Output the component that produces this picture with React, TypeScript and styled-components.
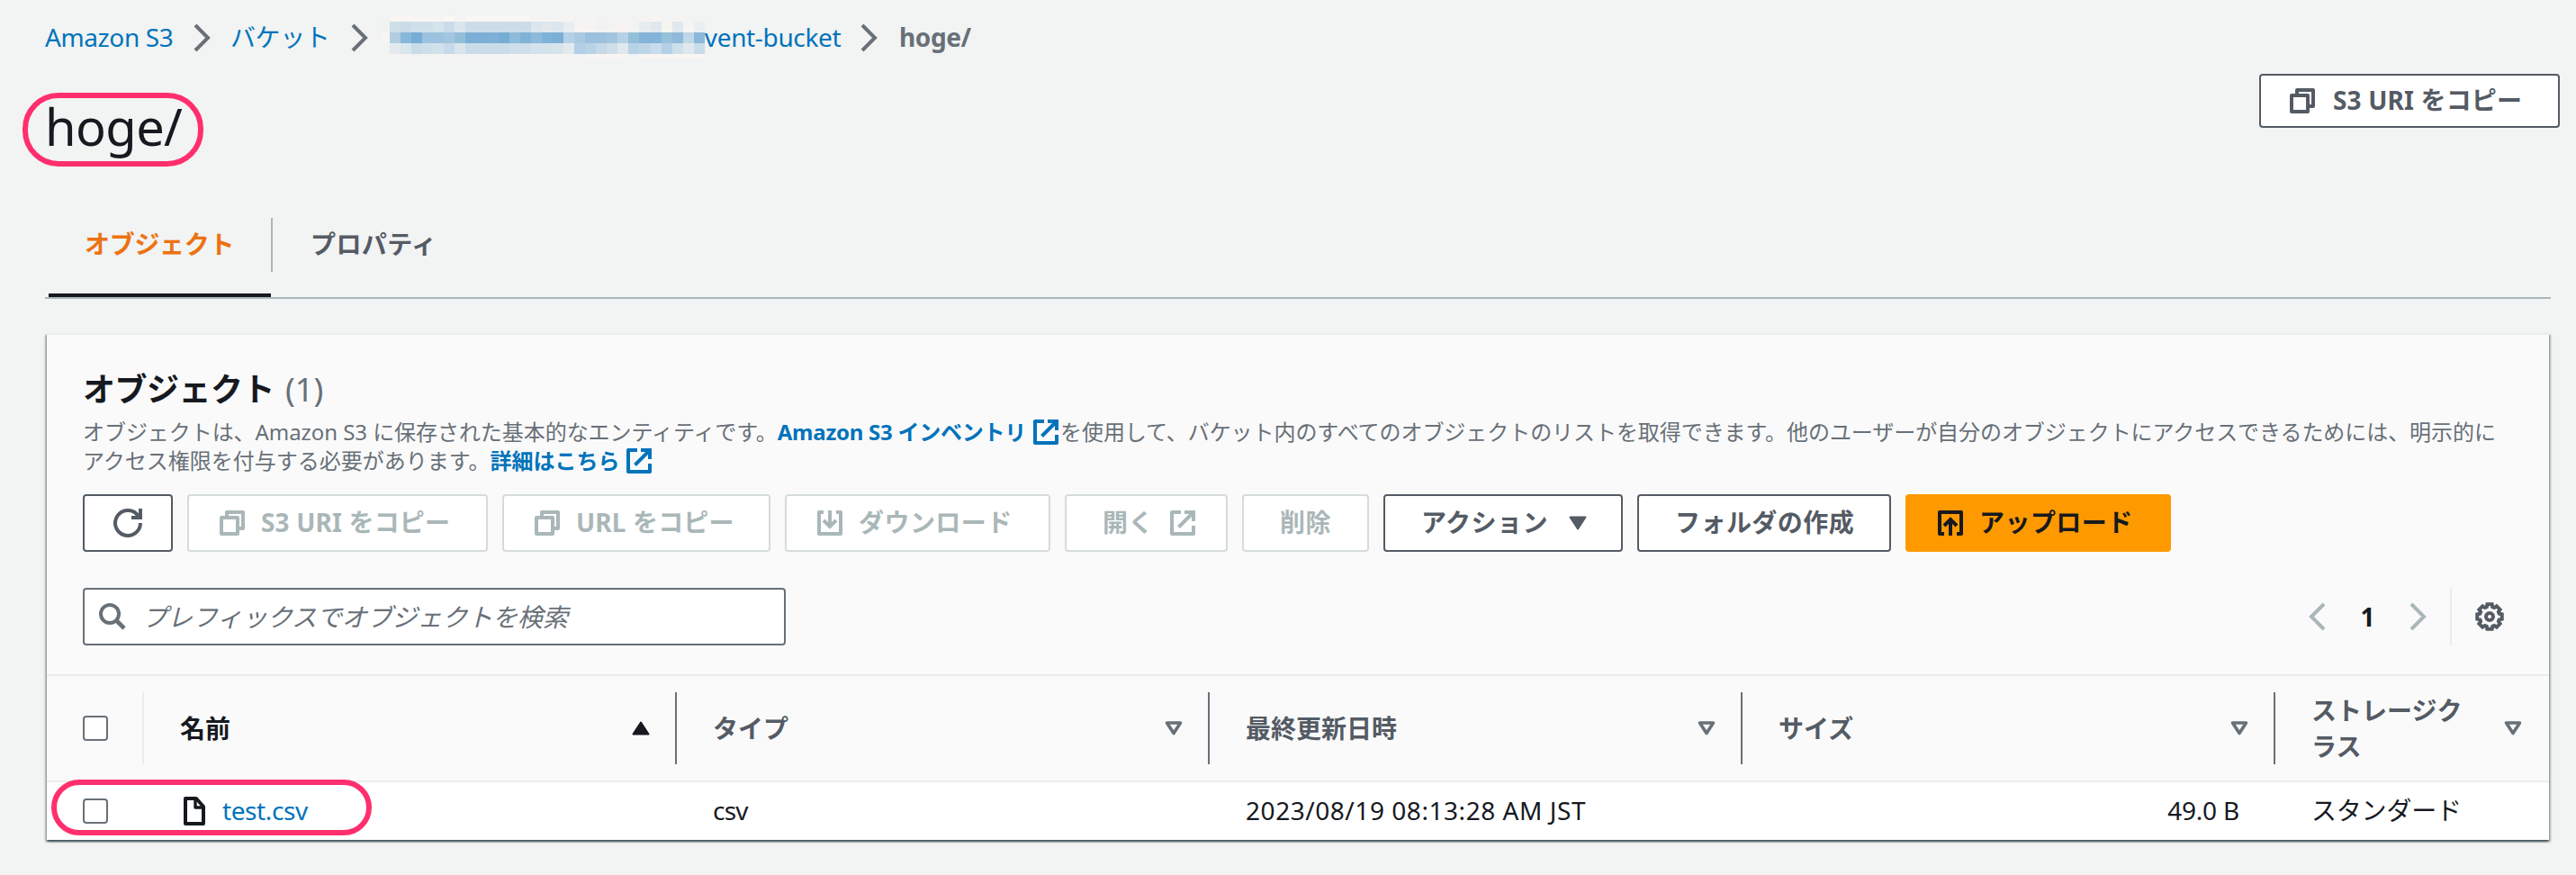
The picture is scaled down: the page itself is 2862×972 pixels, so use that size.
import React from 'react';
import styled, { createGlobalStyle, css } from 'styled-components';

const GlobalStyle = createGlobalStyle`
  *, *::before, *::after { box-sizing: border-box; }
  body {
    margin: 0;
    background: #f2f3f3;
    color: #16191f;
    font-family: "Noto Sans", "Noto Sans CJK JP", sans-serif;
    font-size: 28px;
    line-height: 40px;
  }
`;

const Page = styled.div`
  width: 2862px;
  height: 972px;
  padding: 21px 18px 0 50px;
  overflow: hidden;
`;

/* ---------- text ---------- */

const Tracked = styled.span<{ $track?: number }>`
  letter-spacing: ${(p) => p.$track ?? 0}px;
  white-space: nowrap;
`;

/* ---------- icons ---------- */

const Icon = styled.svg`
  display: block;
  flex: none;
  fill: none;
  stroke: currentColor;
  stroke-width: 4;
`;

const CopyIcon = () => (
  <Icon width="28" height="28" viewBox="0 0 28 28" strokeLinejoin="round">
    <path d="M2 8H20V26H2Z" />
    <path d="M8 8V2H26V20H20" />
  </Icon>
);

const ExternalIcon = () => (
  <Icon width="28" height="28" viewBox="0 0 28 28">
    <path d="M12 2H2V26H26V17" strokeLinejoin="round" />
    <path d="M16 2H26V12M25.5 2.5L9.5 18.5" />
  </Icon>
);

const DownloadIcon = () => (
  <Icon width="28" height="28" viewBox="0 0 28 28">
    <path d="M7 2H2V26H26V2H21" strokeLinejoin="round" />
    <path d="M14 0V18M7 11L14 18L21 11" />
  </Icon>
);

const UploadIcon = () => (
  <Icon width="28" height="28" viewBox="0 0 28 28">
    <path d="M7 26H2V2H26V26H21" strokeLinejoin="round" />
    <path d="M14 28V10M7 17L14 10L21 17" />
  </Icon>
);

const RefreshIcon = () => (
  <Icon width="32" height="32" viewBox="0 0 32 32">
    <path d="M30 16A14 14 0 1 1 27.5 8" />
    <path d="M30 0V10H20" />
  </Icon>
);

const SearchIcon = () => (
  <Icon width="30" height="30" viewBox="0 0 30 30">
    <circle cx="12" cy="12" r="10" />
    <path d="M19 19L28 28" strokeWidth="4.6" />
  </Icon>
);

const ChevronIcon = ({ left }: { left?: boolean }) => (
  <Icon width="19" height="32" viewBox="0 0 19 32">
    <path d={left ? 'M17 2L3 16L17 30' : 'M2 2L16 16L2 30'} />
  </Icon>
);

const gearPoints = Array.from({ length: 8 })
  .flatMap((_, tooth) =>
    [
      [-17, 11.2],
      [-11, 14],
      [11, 14],
      [17, 11.2],
    ].map(([offset, radius]) => {
      const angle = ((tooth * 45 + offset) * Math.PI) / 180;
      return `${(16 + radius * Math.sin(angle)).toFixed(2)},${(16 - radius * Math.cos(angle)).toFixed(2)}`;
    }),
  )
  .join(' ');

const GearIcon = () => (
  <Icon width="32" height="32" viewBox="0 0 32 32">
    <polygon points={gearPoints} />
    <circle cx="16" cy="16" r="4" />
  </Icon>
);

const FileIcon = () => (
  <Icon width="24" height="32" viewBox="0 0 24 32" strokeLinejoin="round">
    <path d="M2 2H14L22 11V30H2Z" />
    <path d="M13 2V12H22" strokeWidth="3.4" />
  </Icon>
);

const CaretDownIcon = () => (
  <Icon width="20" height="16" viewBox="0 0 20 16" strokeLinejoin="round">
    <path d="M1.5 1.5H18.5L10 14.5Z" fill="currentColor" strokeWidth="2" />
  </Icon>
);

const SortAscIcon = () => (
  <Icon width="20" height="16" viewBox="0 0 20 16" strokeLinejoin="round">
    <path d="M1.5 14.5H18.5L10 1.5Z" fill="currentColor" strokeWidth="2" />
  </Icon>
);

const SortIcon = () => (
  <Icon width="20" height="16" viewBox="0 0 20 16" strokeLinejoin="round">
    <path d="M2.5 2H17.5L10 13.5Z" strokeWidth="3.6" />
  </Icon>
);

/* ---------- breadcrumbs ---------- */

const Breadcrumbs = styled.nav`
  display: flex;
  align-items: center;
  height: 40px;
`;

const Crumb = styled.span<{ $width?: number; $current?: boolean }>`
  display: flex;
  align-items: center;
  width: ${(p) => (p.$width ? `${p.$width}px` : 'auto')};
  color: ${(p) => (p.$current ? '#687078' : '#0073bb')};
  font-weight: ${(p) => (p.$current ? 700 : 400)};
`;

const Separator = styled.span<{ $gap: number }>`
  margin-right: ${(p) => p.$gap}px;
  padding-top: 2px;
  color: #687078;
`;

const Mosaic = styled.span`
  display: grid;
  grid-template-columns: 9px repeat(29, 12.07px);
  grid-template-rows: 6px 12px 12px 12px 4px;
`;

const Tile = styled.span<{ $tone: string }>`
  background: #${(p) => p.$tone};
`;

const edge = 'f8f5f3';
const blank = 'f2f3f3';
const repeatTone = (tone: string, n: number) => Array<string>(n).fill(tone);

const mosaicRows: string[][] = [
  [blank, ...repeatTone(edge, 5), 'fcf7f1', 'f5f4f3', ...repeatTone('faf6f3', 6), ...repeatTone('f6f4f3', 4), 'f3f3f3', 'f4f4f3', ...repeatTone(blank, 3), 'f3f3f3', 'f5f4f3', 'f7f5f2', blank, 'f6f4f3', 'f3f3f3', blank],
  ['f0f3f2', 'cddfe9', 'c9dce8', 'cfe0ea', 'd0e0ea', 'd4e3ec', 'cadcea', 'dae6ed', ...repeatTone('ccdde9', 6), 'dbe6ed', 'e0e8ee', 'dae6ed', 'e9edf2', 'f7f3f2', 'f5f4f2', 'f2f2f2', 'f3f3f2', 'f6f3f2', 'f2f3f2', 'e6ecf0', 'dfe8ee', 'f5f4f1', 'dfe8ed', 'f5f4f2', 'ebeff2'],
  ['f8f4f2', 'b0cde2', '87b7db', '76add5', '9bc2de', '9bc2de', 'a2c5e0', '93bed9', '7cafd7', '7cafd7', '7eb0d7', '76add5', '8fbadb', '80b2d8', '8db9da', '7eb1d8', '7cafd6', 'b6d1e6', 'a9c9e1', '9bc1de', '9bc1de', 'a2c5df', 'b6d1e6', '94bfd8', '84b4d9', '84b4d9', '98c1dc', '8fbadb', 'c0d7e7', '8cb8da'],
  [blank, 'e2eaef', 'dae5ed', 'c8dce9', 'cedfe9', 'd3e1eb', 'c5daea', 'dae5eb', 'cadcea', ...repeatTone('c9dce9', 3), 'cedeea', 'cedeea', 'd4e2eb', 'd4e2eb', 'd8e4ec', 'e2eaee', 'b2cfe6', 'b9d3e6', 'c5d9e8', 'cfdfe9', 'e0e8ee', 'b6d3e6', 'bcd5e7', 'c9dceb', 'b5d0e6', 'cddfea', 'e0e8ee', 'c9dcea'],
  [blank, 'f5f4f3', 'f5f4f3', blank, 'f3f3f3', 'f3f3f3', 'f7f5f2', 'f3f3f3', ...repeatTone('f6f4f3', 6), ...repeatTone('f5f4f3', 4), blank, ...repeatTone('f8f5f2', 4), blank, ...repeatTone('f9f6f2', 6)],
].map((row) => [...row, ...repeatTone(blank, Math.max(0, 30 - row.length))].slice(0, 30));

/* ---------- page header ---------- */

const Header = styled.header`
  display: flex;
  justify-content: space-between;
  align-items: flex-start;
  height: 94px;
  margin-top: 21px;
`;

const TitleWrap = styled.div`
  position: relative;
  margin-top: 22px;
`;

const Title = styled.h1`
  margin: 0;
  font-size: 56px;
  line-height: 72px;
  font-weight: 400;
  letter-spacing: -0.6px;
`;

const Highlight = styled.span<{ $x: number; $y: number; $w: number; $h: number }>`
  position: absolute;
  left: ${(p) => p.$x}px;
  top: ${(p) => p.$y}px;
  width: ${(p) => p.$w}px;
  height: ${(p) => p.$h}px;
  border: 6px solid #ff2f6e;
  border-radius: 40px;
  pointer-events: none;
`;

type ButtonKind = 'normal' | 'disabled' | 'primary';

const buttonKinds = {
  normal: css`
    color: #545b64;
    background: #fff;
    border-color: #545b64;
  `,
  disabled: css`
    color: #aab7b8;
    background: #fff;
    border-color: #d5dbdb;
  `,
  primary: css`
    color: #16191f;
    background: #ff9900;
    border-color: #ff9900;
  `,
};

const Button = styled.button<{ $kind?: ButtonKind; $width: number; $height?: number; $pad?: number; $gap?: number }>`
  display: flex;
  align-items: center;
  flex: none;
  gap: ${(p) => p.$gap ?? 18}px;
  width: ${(p) => p.$width}px;
  height: ${(p) => p.$height ?? 64}px;
  padding: 0 0 0 ${(p) => p.$pad ?? 34}px;
  border: 2px solid;
  border-radius: 4px;
  font: inherit;
  font-weight: 700;
  white-space: nowrap;
  ${(p) => buttonKinds[p.$kind ?? 'normal']}
`;

const ButtonLabel = styled.span<{ $track?: number }>`
  padding-bottom: 2px;
  letter-spacing: ${(p) => p.$track ?? 0.45}px;
`;

/* ---------- tabs ---------- */

const Tabs = styled.div`
  display: flex;
  align-items: center;
  width: 2784px;
  height: 120px;
  margin-top: 36px;
  padding-left: 4px;
  border-bottom: 2px solid #aab7b8;
  font-weight: 700;
`;

const Tab = styled.div<{ $active?: boolean }>`
  display: flex;
  align-items: center;
  height: 118px;
  width: 247px;
  padding: ${(p) => (p.$active ? '4px 0 0 40px' : '0 0 0 42px')};
  border-bottom: ${(p) => (p.$active ? '4px solid #16191f' : '0')};
  color: ${(p) => (p.$active ? '#ec7211' : '#545b64')};
  letter-spacing: ${(p) => (p.$active ? -0.3 : 0.4)}px;
  white-space: nowrap;
`;

const TabDivider = styled.span`
  width: 2px;
  height: 60px;
  margin-top: 2px;
  background: #aab7b8;
`;

/* ---------- card ---------- */

const Card = styled.section`
  position: relative;
  width: 2780px;
  margin: 38px 0 0 2px;
  border-top: 2px solid #eaeded;
  background: #fafafa;
  box-shadow:
    0 2px 2px 0 rgba(0, 28, 36, 0.55),
    2px 2px 2px 0 rgba(0, 28, 36, 0.26),
    -2px 2px 2px 0 rgba(0, 28, 36, 0.26);
`;

const CardHeader = styled.div`
  padding: 39px 40px 32px;
`;

const CardTitle = styled.h2`
  display: flex;
  gap: 12px;
  margin: 0;
  font-size: 36px;
  line-height: 44px;
`;

const Counter = styled.span`
  color: #687078;
  font-weight: 400;
`;

const Description = styled.p`
  margin: 9px 0 0;
  color: #687078;
  font-size: 24px;
  line-height: 32px;
`;

const DescriptionLine = styled.span`
  display: flex;
  align-items: center;
  height: 32px;
`;

const InlineLink = styled.a`
  display: flex;
  align-items: center;
  color: #0073bb;
  font-weight: 700;
`;

const LinkIcon = styled.span<{ $right?: number }>`
  margin: 0 ${(p) => p.$right ?? 0}px 0 8px;
`;

const Toolbar = styled.div`
  display: flex;
  gap: 16px;
  margin-top: 21px;
`;

const FilterRow = styled.div`
  display: flex;
  align-items: center;
  justify-content: space-between;
  margin-top: 40px;
`;

const SearchBox = styled.div`
  display: flex;
  align-items: center;
  gap: 18px;
  width: 781px;
  height: 64px;
  padding-left: 16px;
  border: 2px solid #687078;
  border-radius: 4px;
  background: #fff;
  color: #687078;
`;

const Placeholder = styled.span`
  padding-bottom: 1px;
  font-style: italic;
  letter-spacing: -0.1px;
`;

const Pagination = styled.div`
  display: flex;
  align-items: center;
  height: 64px;
  padding-right: 10px;
  color: #aab7b8;
`;

const PageNumber = styled.span`
  width: 93px;
  padding-bottom: 1px;
  color: #16191f;
  font-weight: 700;
  text-align: center;
`;

const Preferences = styled.span`
  display: flex;
  align-items: center;
  height: 64px;
  margin-left: 26px;
  padding-left: 26px;
  border-left: 2px solid #eaeded;
  color: #545b64;
`;

/* ---------- table ---------- */

const Row = styled.div<{ $head?: boolean }>`
  display: grid;
  grid-template-columns: 106px repeat(4, 592px) 306px;
  height: ${(p) => (p.$head ? 120 : 64)}px;
  border: solid #eaeded;
  border-width: ${(p) => (p.$head ? '2px 0' : '0')};
  background: ${(p) => (p.$head ? '#fafafa' : '#fff')};
`;

const CheckCell = styled.div`
  display: flex;
  align-items: center;
  padding-left: 40px;
`;

const Checkbox = styled.span`
  width: 28px;
  height: 28px;
  border: 2px solid #687078;
  border-radius: 4px;
  background: #fff;
`;

const HeadCell = styled.div<{ $sorted?: boolean; $last?: boolean }>`
  display: flex;
  align-items: center;
  padding-right: ${(p) => (p.$last ? 30 : 28)}px;
  color: ${(p) => (p.$sorted ? '#16191f' : '#545b64')};
  font-weight: 700;

  &::before {
    content: '';
    width: 2px;
    height: 80px;
    margin-right: 40px;
    background: ${(p) => (p.$sorted ? '#eaeded' : '#687078')};
  }
`;

const HeadLabel = styled.span`
  flex: 1;
  white-space: nowrap;
`;

const SortMark = styled.span<{ $sorted?: boolean }>`
  color: ${(p) => (p.$sorted ? '#16191f' : '#687078')};
`;

const Cell = styled.div<{ $right?: boolean }>`
  display: flex;
  align-items: center;
  justify-content: ${(p) => (p.$right ? 'flex-end' : 'flex-start')};
  padding: 0 38px 2px 42px;
`;

const FileLink = styled.a`
  display: flex;
  align-items: center;
  gap: 19px;
  padding-left: 4px;
  color: #0073bb;
`;

const FileMark = styled.span`
  padding-top: 2px;
  color: #16191f;
`;

const columns: { label: React.ReactNode; sorted?: boolean; last?: boolean }[] = [
  { label: '名前', sorted: true },
  { label: 'タイプ' },
  { label: '最終更新日時' },
  { label: 'サイズ' },
  { label: <>ストレージク<br />ラス</>, last: true },
];

export default function App() {
  return (
    <>
      <GlobalStyle />
      <Page>
        <Breadcrumbs>
          <Crumb $width={165}><Tracked $track={-0.4}>Amazon S3</Tracked></Crumb>
          <Separator $gap={22}><ChevronIcon /></Separator>
          <Crumb $width={134}><Tracked $track={-0.4}>バケット</Tracked></Crumb>
          <Separator $gap={15}><ChevronIcon /></Separator>
          <Crumb $width={532}>
            <Mosaic>
              {mosaicRows.flatMap((row, y) => row.map((tone, x) => <Tile key={`${y}-${x}`} $tone={tone} />))}
            </Mosaic>
            <Tracked $track={-0.35}>vent-bucket</Tracked>
          </Crumb>
          <Separator $gap={24}><ChevronIcon /></Separator>
          <Crumb $current><Tracked $track={-0.4}>hoge/</Tracked></Crumb>
        </Breadcrumbs>

        <Header>
          <TitleWrap>
            <Title>hoge/</Title>
            <Highlight $x={-25} $y={-1} $w={201} $h={82} />
          </TitleWrap>
          <Button $width={334} $height={60} $pad={32} $gap={20}>
            <CopyIcon />
            <ButtonLabel $track={0.15}>S3 URI をコピー</ButtonLabel>
          </Button>
        </Header>

        <Tabs>
          <Tab $active>オブジェクト</Tab>
          <TabDivider />
          <Tab>プロパティ</Tab>
        </Tabs>

        <Card>
          <CardHeader>
            <CardTitle>
              <Tracked $track={-0.5}>オブジェクト</Tracked>
              <Counter>(1)</Counter>
            </CardTitle>
            <Description>
              <DescriptionLine>
                <Tracked $track={-0.06}>オブジェクトは、Amazon S3 に保存された基本的なエンティティです。</Tracked>
                <InlineLink>
                  <Tracked $track={-0.25}>Amazon S3 インベントリ</Tracked>
                  <LinkIcon $right={2}><ExternalIcon /></LinkIcon>
                </InlineLink>
                <Tracked $track={-0.06}>を使用して、バケット内のすべてのオブジェクトのリストを取得できます。他のユーザーが自分のオブジェクトにアクセスできるためには、明示的に</Tracked>
              </DescriptionLine>
              <DescriptionLine>
                <Tracked>アクセス権限を付与する必要があります。</Tracked>
                <InlineLink>
                  <Tracked>詳細はこちら</Tracked>
                  <LinkIcon><ExternalIcon /></LinkIcon>
                </InlineLink>
              </DescriptionLine>
            </Description>

            <Toolbar>
              <Button $width={100} $pad={32}><RefreshIcon /></Button>
              <Button $kind="disabled" $width={334}><CopyIcon /><ButtonLabel $track={0.15}>S3 URI をコピー</ButtonLabel></Button>
              <Button $kind="disabled" $width={298}><CopyIcon /><ButtonLabel $track={0.15}>URL をコピー</ButtonLabel></Button>
              <Button $kind="disabled" $width={295}><DownloadIcon /><ButtonLabel>ダウンロード</ButtonLabel></Button>
              <Button $kind="disabled" $width={181} $pad={40}><ButtonLabel>開く</ButtonLabel><ExternalIcon /></Button>
              <Button $kind="disabled" $width={141} $pad={40}><ButtonLabel>削除</ButtonLabel></Button>
              <Button $width={266} $pad={40} $gap={23}><ButtonLabel>アクション</ButtonLabel><CaretDownIcon /></Button>
              <Button $width={282} $pad={40}><ButtonLabel>フォルダの作成</ButtonLabel></Button>
              <Button $kind="primary" $width={295}><UploadIcon /><ButtonLabel>アップロード</ButtonLabel></Button>
            </Toolbar>

            <FilterRow>
              <SearchBox>
                <SearchIcon />
                <Placeholder>プレフィックスでオブジェクトを検索</Placeholder>
              </SearchBox>
              <Pagination>
                <ChevronIcon left />
                <PageNumber>1</PageNumber>
                <ChevronIcon />
                <Preferences><GearIcon /></Preferences>
              </Pagination>
            </FilterRow>
          </CardHeader>

          <Row $head>
            <CheckCell><Checkbox /></CheckCell>
            {columns.map((column, i) => (
              <HeadCell key={i} $sorted={column.sorted} $last={column.last}>
                <HeadLabel>{column.label}</HeadLabel>
                <SortMark $sorted={column.sorted}>{column.sorted ? <SortAscIcon /> : <SortIcon />}</SortMark>
              </HeadCell>
            ))}
          </Row>
          <Row>
            <CheckCell><Checkbox /></CheckCell>
            <Cell>
              <FileLink>
                <FileMark><FileIcon /></FileMark>
                <Tracked $track={-0.4}>test.csv</Tracked>
              </FileLink>
            </Cell>
            <Cell><Tracked $track={-0.8}>csv</Tracked></Cell>
            <Cell><Tracked $track={0.55}>2023/08/19 08:13:28 AM JST</Tracked></Cell>
            <Cell $right><Tracked $track={-0.2}>49.0 B</Tracked></Cell>
            <Cell><Tracked $track={-0.2}>スタンダード</Tracked></Cell>
          </Row>
          <Highlight $x={5} $y={494} $w={356} $h={62} />
        </Card>
      </Page>
    </>
  );
}
